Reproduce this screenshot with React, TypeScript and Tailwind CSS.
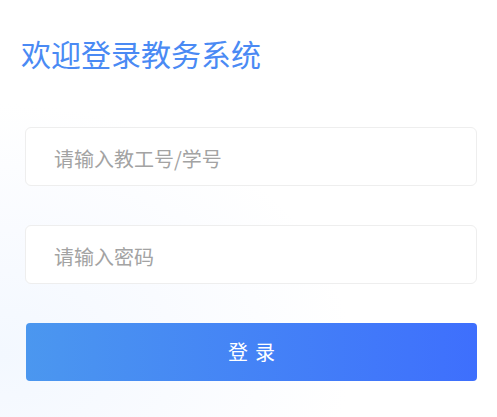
import React from "react";

export default function App() {
  return (
    <div
      className="min-h-[417px] w-full bg-[radial-gradient(ellipse_at_0%_85%,#f3f8ff_0%,#f9fbff_25%,#ffffff_50%)] px-[25px] pt-[33px]"
      style={{ fontFamily: '"Noto Sans CJK SC", "Noto Sans", sans-serif' }}
    >
      <h1 className="-ml-[4px] h-[41px] text-[30px] leading-[41px] font-normal text-[#4a8af4]">
        欢迎登录教务系统
      </h1>
      <div className="mt-[53px] flex flex-col gap-[39px]">
        <input
          className="h-[59px] w-[452px] rounded-[6px] border border-[#eeeeee] bg-white pl-[28px] pt-[3px] text-[20px] text-[#333] outline-none placeholder:text-[#a3a3a3]"
          placeholder="请输入教工号/学号"
        />
        <input
          type="password"
          className="h-[59px] w-[452px] rounded-[6px] border border-[#eeeeee] bg-white pl-[28px] pt-[3px] text-[20px] text-[#333] outline-none placeholder:text-[#a3a3a3]"
          placeholder="请输入密码"
        />
        <button className="ml-[1px] h-[58px] w-[451px] rounded-[4px] bg-[linear-gradient(to_right,#4b97ef,#3e6ffd)] text-[20px] tracking-[7px] text-white">
          <span className="pl-[7px]">登录</span>
        </button>
      </div>
    </div>
  );
}
